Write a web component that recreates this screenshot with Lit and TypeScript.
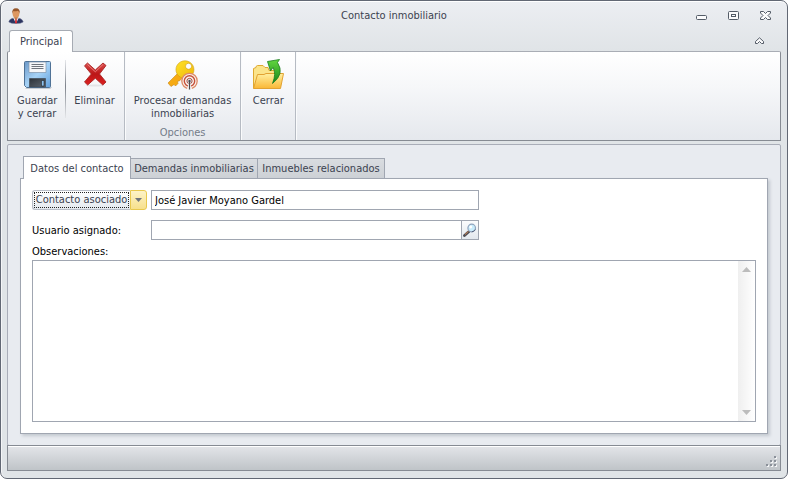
import { LitElement, html, css, svg } from "lit";
import { customElement, state } from "lit/decorators.js";

const userIcon = svg`
  <svg width="16" height="16" viewBox="0 0 16 16" aria-hidden="true">
    <path d="M.8 14 Q1 11.200 5 10.200 L11 10.200 Q14.800 11.200 15.200 14 Q13 15.600 8 15.600 Q3 15.600 .8 14Z" fill="#2c3560" stroke="#6b7090" stroke-width=".5"/>
    <path d="M5.300 10 L8 15.500 L10.700 10Z" fill="#eceff5"/>
    <path d="M7.300 11 H8.700 L9 15 L8 15.600 L7 15Z" fill="#d3262c"/>
    <path d="M6.300 8 H9.700 V10.500 L8 11.500 L6.300 10.500Z" fill="#c57d48"/>
    <ellipse cx="8" cy="5.400" rx="3.400" ry="4.200" fill="#dd9862"/>
    <path d="M4.400 5.800 Q3.600 .3 8 .3 Q12.400 .3 11.600 5.800 Q11.200 3.300 9.800 2.700 Q7 3.600 5.300 2.900Z" fill="#96562a"/>
  </svg>`;

const saveIcon = svg`
  <svg width="32" height="32" viewBox="0 0 32 32" aria-hidden="true">
    <defs>
      <linearGradient id="g" x1="0" y1="0" x2="1" y2="1">
        <stop offset="0" stop-color="#6b98c8"/><stop offset=".5" stop-color="#a6d2f6"/><stop offset="1" stop-color="#62a0dc"/>
      </linearGradient>
      <linearGradient id="d" x1="0" y1="0" x2="1" y2="1">
        <stop offset="0" stop-color="#2c3138"/><stop offset="1" stop-color="#5e666f"/>
      </linearGradient>
    </defs>
    <path d="M4.500 30.500 H29.500 L30.500 29" fill="none" stroke="#c9ccd1"/>
    <path d="M4.500 3.500 H28.500 Q29.500 3.500 29.500 4.500 V28.500 Q29.500 29.500 28.500 29.500 H5.500 L3.500 27.500 V4.500 Q3.500 3.500 4.500 3.500Z" fill="url(#g)" stroke="#4f7296"/>
    <path d="M8 4 H25 V14.500 H8Z" fill="#f6f7f9" stroke="#7f93aa" stroke-width=".7"/>
    <path d="M10.500 6.500 H22.500 M10.500 8.500 H22.500 M10.500 10.500 H22.500" stroke="#70757d"/>
    <path d="M8.500 20.500 H24.500 V29 H8.500Z" fill="url(#d)" stroke="#3b4149" stroke-width=".6"/>
    <path d="M20.500 22.500 H23 V28 H20.500Z" fill="#8fc2ee" stroke="#1f252c" stroke-width=".6"/>
  </svg>`;

const deleteIcon = svg`
  <svg width="32" height="32" viewBox="0 0 32 32" aria-hidden="true">
    <defs>
      <linearGradient id="g" x1="0" y1="0" x2="0" y2="1">
        <stop offset="0" stop-color="#dc4f4e"/><stop offset=".5" stop-color="#bb1617"/><stop offset="1" stop-color="#dd2020"/>
      </linearGradient>
    </defs>
    <ellipse cx="16" cy="27.500" rx="9" ry="1" fill="#e4e5e8"/>
    <path d="M8.500 5 L16.300 12 L24 5 L27 7.500 L20.500 16 L27 24 L23.800 27 L16.300 20.200 L8.700 27 L5.500 24 L12.300 16 L5.500 7.800Z" fill="url(#g)" stroke="#a92524" stroke-width=".9" stroke-linejoin="round"/>
    <path d="M8.500 6.500 L16.300 13.800 L24 6.500" fill="none" stroke="#f08d8a" stroke-width=".8"/>
  </svg>`;

const keyIcon = svg`
  <svg width="32" height="32" viewBox="0 0 32 32" aria-hidden="true">
    <defs>
      <linearGradient id="g" x1="0" y1="0" x2="1" y2="1">
        <stop offset="0" stop-color="#ffe326"/><stop offset="1" stop-color="#efb60c"/>
      </linearGradient>
    </defs>
    <path d="M10.500 15.500 L1 25 L4 28.500 L7 26.500 L8.500 28 L11 25.500 L10.500 23.500 L13 22.500 L17 18Z" fill="#f6aa12" stroke="#c98614" stroke-width=".6"/>
    <path fill-rule="evenodd" d="M18 2.800 A9 8.800 0 1 1 17.900 2.800Z M21.500 5.300 A3 3 0 1 0 21.600 5.300Z" fill="url(#g)" stroke="#cfa012" stroke-width=".6"/>
    <circle cx="22.500" cy="23" r="7.700" fill="#fbf1eb" stroke="#dd8a66" stroke-width="1.300"/>
    <circle cx="22.500" cy="23" r="5.200" fill="none" stroke="#c5503a" stroke-width="1.400"/>
    <circle cx="22.500" cy="23" r="2.600" fill="#fff" stroke="#9c4a40"/>
    <path d="M20 31.500 L22 24 H23 L25 31.500Z" fill="#fff"/>
    <path d="M22.500 23 V31.500" stroke="#4c4c50" stroke-width="1.300"/>
    <circle cx="22.500" cy="23" r="1.200" fill="#4c4c50"/>
  </svg>`;

const folderIcon = svg`
  <svg width="32" height="32" viewBox="0 0 32 32" aria-hidden="true">
    <defs>
      <linearGradient id="g" x1="0" y1="0" x2="0" y2="1"><stop offset="0" stop-color="#fff0a0"/><stop offset="1" stop-color="#fab735"/></linearGradient>
      <linearGradient id="a" x1="0" y1="0" x2="0" y2="1"><stop offset="0" stop-color="#63d840"/><stop offset="1" stop-color="#178417"/></linearGradient>
    </defs>
    <path d="M1.500 30 V10.500 L4 9.500 V8.500 L5.500 7.500 H11 L13 9.500 H16 L17 12.500 H27.500 V30Z" fill="#fbe48a" stroke="#dfa931"/>
    <path d="M5.500 16.500 H12 L14 15.500 H31.500 L28.500 30.500 H1.500Z" fill="url(#g)" stroke="#e2a232"/>
    <path d="M15.500 3.500 L27.500 1.500 L25.500 4.500 Q33 16 20.500 25.500 Q24.500 15.500 21 9.500 L18.500 13Z" fill="url(#a)" stroke="#1c7d20" stroke-width=".8" stroke-linejoin="round"/>
  </svg>`;

const minimizeIcon = svg`
  <svg width="12" height="12" viewBox="0 0 12 12" aria-hidden="true">
    <rect x=".5" y="5.500" width="10" height="4" rx="1" fill="#fbfbfc" stroke="#535b66"/>
  </svg>`;
const maximizeIcon = svg`
  <svg width="12" height="12" viewBox="0 0 12 12" aria-hidden="true">
    <rect x=".5" y="1.500" width="10" height="8" rx="1" fill="#fbfbfc" stroke="#535b66"/>
    <rect x="3.500" y="4.500" width="4" height="2" fill="#fbfbfc" stroke="#535b66"/>
  </svg>`;
const closeIcon = svg`
  <svg width="12" height="12" viewBox="0 0 12 12" aria-hidden="true">
    <path d="M.5 1.500 H3.500 L5.500 3.500 L7.500 1.500 H10.500 V3 L8 5.500 L10.500 8 V9.500 H7.500 L5.500 7.500 L3.500 9.500 H.5 V8 L3 5.500 L.5 3Z" fill="#fbfbfc" stroke="#535b66"/>
  </svg>`;
const collapseIcon = svg`
  <svg width="10" height="8" viewBox="0 0 10 8" aria-hidden="true">
    <path d="M4.500 .8 L8.500 4.500 V6.500 H6.500 L4.500 4.500 L2.500 6.500 H.5 V4.500Z" fill="#fbfbfc" stroke="#535b66"/>
  </svg>`;
const comboArrow = svg`
  <svg width="7" height="4" viewBox="0 0 7 4" aria-hidden="true"><path d="M0 0 H7 L3.500 4Z" fill="#6f747c"/></svg>`;
const searchIcon = svg`
  <svg width="14" height="14" viewBox="0 0 14 14" aria-hidden="true">
    <path d="M1.500 12.500 L6 8.500" stroke="#4f4e55" stroke-width="2.800" stroke-linecap="round"/>
    <path d="M2 11.500 L5.500 8.300" stroke="#d88a55" stroke-width="1"/>
    <circle cx="8.700" cy="5" r="3.800" fill="#c9ecfb" stroke="#8fa3bd" stroke-width="1.200"/>
    <path d="M12.200 6.500 Q11 8.800 8.800 8.800" fill="none" stroke="#55607a" stroke-width="1"/>
    <circle cx="7.700" cy="4" r="1.400" fill="#fff"/>
  </svg>`;
const upArrow = svg`
  <svg width="9" height="5" viewBox="0 0 9 5" aria-hidden="true"><path d="M0 5 L4.500 0 L9 5Z" fill="#bcbcbc"/></svg>`;
const downArrow = svg`
  <svg width="9" height="5" viewBox="0 0 9 5" aria-hidden="true"><path d="M0 0 L4.500 5 L9 0Z" fill="#bcbcbc"/></svg>`;
const gripIcon = svg`
  <svg width="11" height="11" viewBox="0 0 11 11" aria-hidden="true">
    <path d="M9 1h2v2h-2z M9 5h2v2h-2z M5 5h2v2h-2z M9 9h2v2h-2z M5 9h2v2h-2z M1 9h2v2h-2z" fill="#f4f5f6"/>
    <path d="M8 0h2v2h-2z M8 4h2v2h-2z M4 4h2v2h-2z M8 8h2v2h-2z M4 8h2v2h-2z M0 8h2v2h-2z" fill="#8a9099"/>
  </svg>`;

@customElement("ribbon-button")
export class RibbonButton extends LitElement {
  static properties = { icon: { attribute: false } };
  declare icon: unknown;

  static styles = css`
    button {
      display: flex; flex-direction: column; align-items: center; gap: 4px;
      padding: 0; border: 0; background: none; color: #3b4250;
      font: inherit; line-height: 13px; text-align: center;
    }
    svg { display: block; }
  `;

  render() {
    return html`<button type="button">${this.icon}<span><slot></slot></span></button>`;
  }
}

@customElement("app-root")
export class AppRoot extends LitElement {
  @state() private tab = 0;

  static styles = css`
    :host {
      display: block; background: #fff; color: #3b4250;
      font: 11px/13px "DejaVu Sans Condensed", "Noto Sans", sans-serif;
    }
    * { box-sizing: border-box; }
    svg { display: block; }
    button, input, textarea { font: inherit; color: inherit; margin: 0; }

    .window {
      display: flex; flex-direction: column; min-height: 100vh;
      padding: 0 6px 7px; border: 1px solid #626874; border-radius: 7px;
      background: linear-gradient(#eceef2 0, #e0e4e7 50px, #e0e4e7 100%);
      box-shadow: inset 0 1px #fff, inset 1px 0 #f4f5f7;
    }

    .titlebar { display: grid; grid-template-columns: 1fr auto 1fr; align-items: center; height: 29px; }
    .app { padding-left: 1px; }
    h1 { margin: 0; font: inherit; }
    .controls { display: flex; justify-content: flex-end; gap: 20px; padding-right: 9px; }
    .plain { display: block; padding: 0; border: 0; background: none; }

    .ribbon-tabs {
      display: flex; justify-content: space-between; align-items: center;
      height: 21px; padding: 0 16px 0 2px;
    }
    .ribbon-tab {
      align-self: stretch; margin-bottom: -1px; padding: 0 10px; z-index: 1;
      border: 1px solid #a6abb3; border-bottom: 0; border-radius: 3px 3px 0 0; background: #fff;
    }
    .ribbon {
      display: flex; height: 90px; border: 1px solid #868b93; border-top-color: #a9adb5;
      border-radius: 2px 2px 0 0; background: linear-gradient(#fff, #f6f7f9 40%, #e5e8ed);
    }
    .group {
      display: flex; flex-direction: column; justify-content: space-between;
      min-width: 55px; padding: 6px 9px 1px;
      border-right: 1px solid #b6bbc3; box-shadow: 1px 0 #fafbfc;
    }
    .items { display: flex; justify-content: center; }
    .split {
      width: 1px; height: 58px; margin: 2px 8px 0;
      background: linear-gradient(#e5e7ea, #7d828b 45%, #e5e7ea);
    }
    .caption { text-align: center; color: #747b89; }

    .body {
      flex: 1; display: flex; flex-direction: column; margin-top: 3px; padding: 11px 12px;
      border: 1px solid #a9adb8; border-radius: 2px; background: #e8ebf0;
    }
    .tabs { display: flex; align-items: flex-end; padding-left: 3px; margin-bottom: -1px; }
    .tab {
      height: 21px; min-width: 128px; padding: 0 3px; margin-left: -1px; border: 1px solid #a0a6b1;
      background: linear-gradient(#d9dce0, #cdd1d6);
    }
    .tab.on {
      height: 23px; min-width: 108px; margin-left: 0; z-index: 1;
      background: #fff; border-bottom: 0;
    }
    .panel {
      flex: 1; display: flex; flex-direction: column; padding: 11px;
      border: 1px solid #a0a6b1; background: #fff; box-shadow: 2px 2px 3px #c3c8cf; color: #000;
    }
    .row {
      display: grid; grid-template-columns: 115px 328px; gap: 4px;
      align-items: center; margin-bottom: 10px;
    }
    .field { display: flex; height: 20px; border: 1px solid #a0a6b1; background: #fff; }
    input { flex: 1; min-width: 0; border: 0; padding: 0 3px; background: none; outline: 0; }
    .find {
      display: grid; place-items: center; width: 17px; padding: 0; border: 0;
      border-left: 1px solid #a0a6b1; background: linear-gradient(#fbfcfd, #e3e8ee);
    }
    .combo { display: flex; height: 20px; }
    .combo button { padding: 0; border: 1px solid #b9bec8; }
    .combo .main {
      flex: 1; padding: 0 1px; border-right: 0; border-radius: 3px 0 0 3px;
      background: linear-gradient(#fff, #e4e9ef); color: #3b4250;
    }
    .main span { display: block; border: 1px dotted #222; line-height: 14px; white-space: nowrap; }
    .combo .arrow {
      display: grid; place-items: center; width: 17px; border-color: #e8c84e;
      border-radius: 0 3px 3px 0; background: linear-gradient(#fdf3c8, #f7e08c);
    }
    .notes-label { margin: -5px 0 2px; }
    .notes { flex: 1; display: flex; min-height: 60px; border: 1px solid #a0a6b1; }
    textarea { flex: 1; border: 0; resize: none; outline: 0; background: none; padding: 3px; }
    .scroll {
      display: flex; flex-direction: column; justify-content: space-between; align-items: center;
      width: 17px; padding: 6px 0; background: linear-gradient(90deg, #efefef, #fff);
    }

    .status {
      display: flex; justify-content: flex-end; align-items: flex-end;
      height: 26px; padding: 3px; margin-top: -1px;
      border: 1px solid #868b93; box-shadow: inset 0 1px #fff;
      background: linear-gradient(#e3e5e9, #bfc4c8);
    }
  `;

  render() {
    const tabs = ["Datos del contacto", "Demandas inmobiliarias", "Inmuebles relacionados"];
    return html`
      <div class="window">
        <header class="titlebar">
          <span class="app">${userIcon}</span>
          <h1>Contacto inmobiliario</h1>
          <div class="controls">
            <button class="plain" aria-label="Minimizar">${minimizeIcon}</button>
            <button class="plain" aria-label="Maximizar">${maximizeIcon}</button>
            <button class="plain" aria-label="Cerrar ventana">${closeIcon}</button>
          </div>
        </header>
        <div class="ribbon-tabs">
          <button class="ribbon-tab">Principal</button>
          <button class="plain" aria-label="Contraer la cinta">${collapseIcon}</button>
        </div>
        <div class="ribbon">
          <section class="group">
            <div class="items">
              <ribbon-button .icon=${saveIcon}>Guardar<br />y cerrar</ribbon-button>
              <div class="split"></div>
              <ribbon-button .icon=${deleteIcon}>Eliminar</ribbon-button>
            </div>
          </section>
          <section class="group">
            <div class="items">
              <ribbon-button .icon=${keyIcon}>Procesar demandas<br />inmobiliarias</ribbon-button>
            </div>
            <div class="caption">Opciones</div>
          </section>
          <section class="group">
            <div class="items">
              <ribbon-button .icon=${folderIcon}>Cerrar</ribbon-button>
            </div>
          </section>
        </div>
        <main class="body">
          <div class="tabs" role="tablist">
            ${tabs.map(
              (name, i) => html`<button
                role="tab"
                aria-selected=${i === this.tab ? "true" : "false"}
                class="tab ${i === this.tab ? "on" : ""}"
                @click=${() => (this.tab = i)}
              >${name}</button>`
            )}
          </div>
          <div class="panel" role="tabpanel">
            <div class="row">
              <div class="combo">
                <button class="main"><span>Contacto asociado</span></button>
                <button class="arrow" aria-label="Elegir tipo de contacto">${comboArrow}</button>
              </div>
              <div class="field">
                <input aria-label="Contacto asociado" value="José Javier Moyano Gardel" />
              </div>
            </div>
            <div class="row">
              <label for="user">Usuario asignado:</label>
              <div class="field">
                <input id="user" />
                <button class="find" aria-label="Buscar usuario">${searchIcon}</button>
              </div>
            </div>
            <label class="notes-label" for="notes">Observaciones:</label>
            <div class="notes">
              <textarea id="notes"></textarea>
              <div class="scroll">${upArrow}${downArrow}</div>
            </div>
          </div>
        </main>
        <footer class="status">${gripIcon}</footer>
      </div>`;
  }
}
